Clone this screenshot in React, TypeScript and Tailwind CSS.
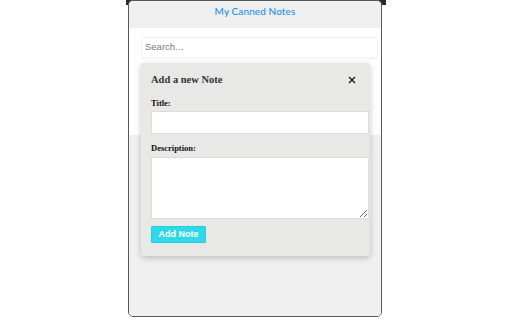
import React from "react";

export default function App() {
  return (
    <div className="w-[512px] h-[320px] bg-white overflow-hidden">
      <div className="relative ml-[126px] w-[260px] h-[317px]">
        <div className="absolute left-0 right-0 top-0 h-[5px] bg-[#2a2a2e]" />
        <div className="relative ml-[2px] w-[254px] h-[317px] rounded-[5px] border border-[#58585c] bg-[#f0f0f0] flex flex-col overflow-hidden">
          <div className="h-[27px] flex items-start justify-center pt-[3px] bg-[#efefef]">
            <span
              className="text-[10px] text-[#1f8ff0] font-medium tracking-[0.1px]"
              style={{ fontFamily: "Lato, 'Open Sans', sans-serif" }}
            >
              My Canned Notes
            </span>
          </div>
          <div className="h-[107px] bg-white pt-[9px] pl-[12px] pr-[3px]">
            <div className="h-[21px] rounded-[3px] border border-[#f3f3f3] shadow-[0_1px_2px_rgba(0,0,0,0.05)] bg-white flex items-center pl-[3px]">
              <span
                className="text-[9.5px] text-[#7a7a7a]"
                style={{ fontFamily: "'Liberation Sans', Arial, sans-serif" }}
              >
                Search...
              </span>
            </div>
          </div>
          <div className="flex-1 bg-[#f0f0f0]" />

          <div
            className="absolute left-[12px] top-[62px] w-[229px] h-[193px] rounded-[3px] bg-[#e8e8e6] shadow-[0_2px_6px_rgba(0,0,0,0.22)] pl-[10px] pr-[1px] pt-[9px] flex flex-col"
            style={{ fontFamily: "'Liberation Serif', 'Times New Roman', serif" }}
          >
            <div className="flex items-center justify-between h-[16px] pr-[13px]">
              <span className="text-[10.5px] font-bold text-[#333]">Add a new Note</span>
              <svg width="8" height="8" viewBox="0 0 8 8">
                <path d="M1 1 L7 7 M7 1 L1 7" stroke="#111" strokeWidth="1.2" />
              </svg>
            </div>
            <div className="mt-[10px] text-[8.5px] font-bold text-[#111] leading-[10px]">Title:</div>
            <input className="block mt-[3px] h-[23px] w-full bg-white border border-[#dcdcdc] outline-none" />
            <div className="mt-[9px] text-[8.5px] font-bold text-[#111] leading-[10px]">Description:</div>
            <textarea className="block mt-[4px] h-[62px] w-full bg-white border border-[#dcdcdc] outline-none" />
            <div className="mt-[7px]">
              <button
                className="block h-[17px] w-[55px] bg-[#2fd8e6] border border-[#22cfdd] rounded-[1px] text-white text-[9px] font-bold"
                style={{ fontFamily: "'Liberation Sans', Arial, sans-serif" }}
              >
                Add Note
              </button>
            </div>
          </div>
        </div>
      </div>
    </div>
  );
}
